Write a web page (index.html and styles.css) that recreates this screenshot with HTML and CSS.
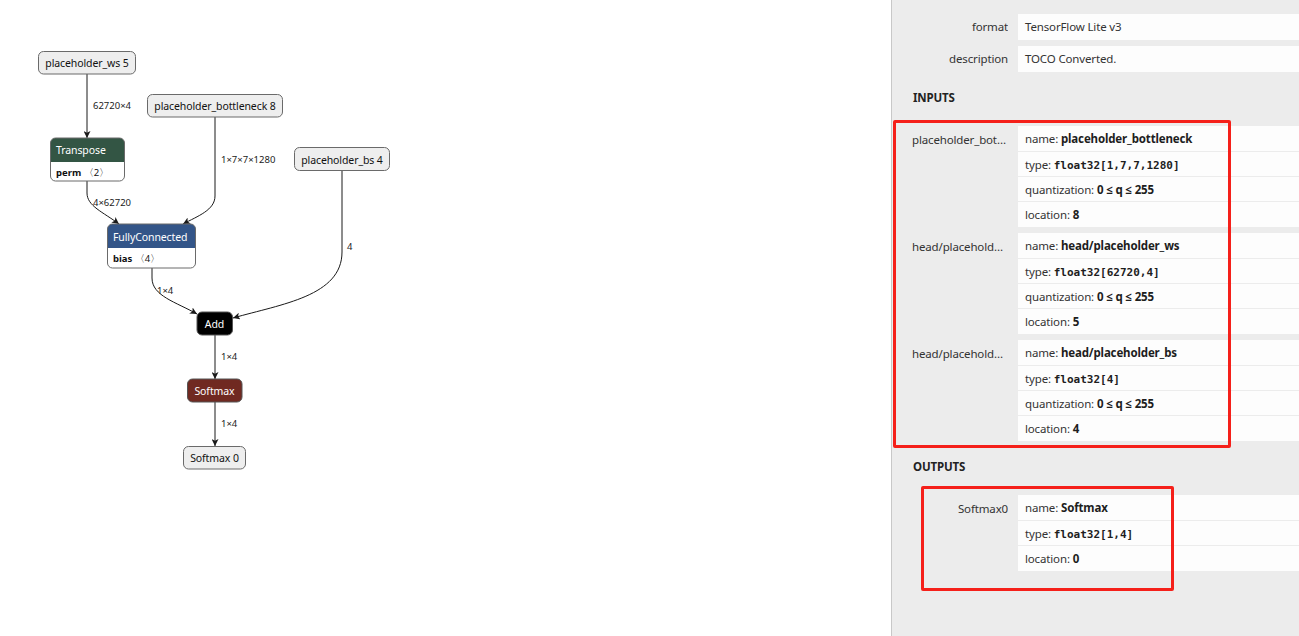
FILE: index.html
```html
<!DOCTYPE html>
<html>
<head>
<meta charset="utf-8">
<link rel="stylesheet" href="styles.css">
</head>
<body>
<div class="app">
  <div class="graph">
    <svg class="canvas" width="891" height="636" viewBox="0 0 891 636">
      <defs>
        <marker id="arrow" viewBox="0 0 10 10" refX="10" refY="5" markerWidth="7" markerHeight="7" markerUnits="userSpaceOnUse" orient="auto">
          <path d="M0 0 L10 5 L0 10 L2.5 5 Z" class="arrowhead"/>
        </marker>
      </defs>
      <g class="edges">
        <path d="M87 74 L87 138" marker-end="url(#arrow)"/>
        <path d="M87 181 L87 193 C87 206 103 212 119 224" marker-end="url(#arrow)"/>
        <path d="M215 117 L215 196 C215 210 198 216 183 224" marker-end="url(#arrow)"/>
        <path d="M342 171 L342 252 C342 296 282 304 233 318" marker-end="url(#arrow)"/>
        <path d="M152 268 L152 278 C152 296 176 302 197 314" marker-end="url(#arrow)"/>
        <path d="M215 335 L215 379" marker-end="url(#arrow)"/>
        <path d="M215 402 L215 446" marker-end="url(#arrow)"/>
      </g>
      <g class="edge-labels">
        <text x="93" y="109">62720×4</text>
        <text x="221" y="163">1×7×7×1280</text>
        <text x="93" y="205.5">4×62720</text>
        <text x="347" y="250">4</text>
        <text x="157" y="293.5">1×4</text>
        <text x="221" y="360">1×4</text>
        <text x="221" y="426.5">1×4</text>
      </g>
      <g class="nodes">
        <rect class="io" x="38.5" y="51.5" width="97" height="22.5" rx="5"/>
        <text class="io-text" x="87" y="66.5">placeholder_ws 5</text>

        <rect class="io" x="147.5" y="94.5" width="135" height="22.5" rx="5"/>
        <text class="io-text" x="215" y="110">placeholder_bottleneck 8</text>

        <rect class="io" x="294.5" y="147.5" width="95" height="23" rx="5"/>
        <text class="io-text" x="342" y="164">placeholder_bs 4</text>

        <path class="hdr transform" d="M50.5 162 V143 A5 5 0 0 1 55.5 138 H119.5 A5 5 0 0 1 124.5 143 V162 Z"/>
        <path class="body" d="M50.5 162 H124.5 V176 A5 5 0 0 1 119.5 181 H55.5 A5 5 0 0 1 50.5 176 Z"/>
        <rect class="frame" x="50.5" y="138" width="74" height="43" rx="5"/>
        <text class="hdr-text" x="56" y="154">Transpose</text>
        <text class="attr" x="56" y="175.5"><tspan class="attr-name">perm</tspan> 〈2〉</text>

        <path class="hdr layer" d="M107.5 248 V229 A5 5 0 0 1 112.5 224 H190.5 A5 5 0 0 1 195.5 229 V248 Z"/>
        <path class="body" d="M107.5 248 H195.5 V263 A5 5 0 0 1 190.5 268 H112.5 A5 5 0 0 1 107.5 263 Z"/>
        <rect class="frame" x="107.5" y="224" width="88" height="44" rx="5"/>
        <text class="hdr-text" x="113" y="241">FullyConnected</text>
        <text class="attr" x="113" y="261.5"><tspan class="attr-name">bias</tspan> 〈4〉</text>

        <rect class="op plain" x="197" y="312" width="35.5" height="23" rx="5"/>
        <text class="hdr-text mid" x="214.5" y="327.5">Add</text>

        <rect class="op activation" x="187.5" y="379" width="54.5" height="23" rx="5"/>
        <text class="hdr-text mid" x="214.5" y="394.5">Softmax</text>

        <rect class="io" x="183.5" y="446.5" width="62" height="22.5" rx="5"/>
        <text class="io-text" x="214.5" y="462">Softmax 0</text>
      </g>
    </svg>
  </div>

  <aside class="sidebar">
    <div class="prop">
      <div class="prop-label tall">format</div>
      <div class="prop-value"><div class="line tall">TensorFlow Lite v3</div></div>
    </div>
    <div class="prop">
      <div class="prop-label tall">description</div>
      <div class="prop-value"><div class="line tall">TOCO Converted.</div></div>
    </div>

    <div class="section-title">INPUTS</div>
    <div class="prop">
      <div class="prop-label">placeholder_bottleneck</div>
      <div class="prop-value">
        <div class="line">name: <b>placeholder_bottleneck</b></div>
        <div class="line">type: <code>float32[1,7,7,1280]</code></div>
        <div class="line">quantization: <b>0 ≤ q ≤ 255</b></div>
        <div class="line">location: <b>8</b></div>
      </div>
    </div>
    <div class="prop">
      <div class="prop-label">head/placeholder_ws</div>
      <div class="prop-value">
        <div class="line">name: <b>head/placeholder_ws</b></div>
        <div class="line">type: <code>float32[62720,4]</code></div>
        <div class="line">quantization: <b>0 ≤ q ≤ 255</b></div>
        <div class="line">location: <b>5</b></div>
      </div>
    </div>
    <div class="prop">
      <div class="prop-label">head/placeholder_bs</div>
      <div class="prop-value">
        <div class="line">name: <b>head/placeholder_bs</b></div>
        <div class="line">type: <code>float32[4]</code></div>
        <div class="line">quantization: <b>0 ≤ q ≤ 255</b></div>
        <div class="line">location: <b>4</b></div>
      </div>
    </div>

    <div class="section-title">OUTPUTS</div>
    <div class="prop">
      <div class="prop-label">Softmax0</div>
      <div class="prop-value">
        <div class="line">name: <b>Softmax</b></div>
        <div class="line">type: <code>float32[1,4]</code></div>
        <div class="line">location: <b>0</b></div>
      </div>
    </div>
  </aside>
</div>
<div class="mark mark-inputs"></div>
<div class="mark mark-outputs"></div>
</body>
</html>
```

FILE: styles.css
```css
html, body {
  margin: 0;
  padding: 0;
  background: #ffffff;
}
body {
  font-family: "Noto Sans", "Open Sans", sans-serif;
  color: #333;
  position: relative;
  width: 1299px;
  height: 636px;
  overflow: hidden;
}
.app {
  display: flex;
  width: 1299px;
  height: 636px;
}
.graph {
  width: 891px;
  flex: none;
  background: #fff;
}
.canvas {
  display: block;
}
.edges path {
  fill: none;
  stroke: #1a1a1a;
  stroke-width: 1;
}
.arrowhead {
  fill: #1a1a1a;
  stroke: none;
}
.edge-labels text {
  font-family: "Noto Sans", sans-serif;
  font-size: 9.5px;
  fill: #222;
}
.io {
  fill: #eeeeee;
  stroke: #6a6a6a;
  stroke-width: 1;
}
.io-text {
  font-family: "Noto Sans", sans-serif;
  font-size: 10.5px;
  letter-spacing: -0.1px;
  fill: #111;
  text-anchor: middle;
}
.hdr {
  stroke: none;
}
.transform { fill: #335544; }
.layer { fill: #335588; }
.plain { fill: #000000; }
.activation { fill: #702921; }
.op {
  stroke: #555;
  stroke-width: 1;
}
.body {
  fill: #ffffff;
  stroke: none;
}
.frame {
  fill: none;
  stroke: #6a6a6a;
  stroke-width: 1;
}
.hdr-text {
  font-family: "Noto Sans", sans-serif;
  font-size: 10.5px;
  letter-spacing: -0.1px;
  fill: #ffffff;
}
.hdr-text.mid {
  text-anchor: middle;
}
.attr {
  font-family: "Noto Sans", sans-serif;
  font-size: 9.5px;
  fill: #111;
}
.attr-name {
  font-weight: bold;
}

.sidebar {
  flex: none;
  border-left: 1px solid #c8c8c8;
  background: #ececec;
  padding: 14px 0 0 20px;
  box-sizing: border-box;
  width: 408px;
  overflow: hidden;
  font-size: 11.5px;
  letter-spacing: -0.15px;
}
.prop {
  display: flex;
  gap: 10px;
  margin-bottom: 6px;
}
.prop-label {
  width: 96px;
  flex: none;
  text-align: right;
  white-space: nowrap;
  overflow: hidden;
  text-overflow: ellipsis;
  padding-top: 1px;
  line-height: 25px;
  color: #333;
}
.prop-label.tall {
  padding-top: 0;
  line-height: 26px;
}
.prop-value {
  flex: 1;
  min-width: 0;
  background: #fdfdfd;
  padding-bottom: 1px;
}
.line {
  height: 25px;
  line-height: 24px;
  padding: 1px 7px 0;
  box-sizing: border-box;
  white-space: nowrap;
  color: #333;
}
.line + .line {
  border-top: 1px solid #ececec;
  line-height: 23px;
}
.line.tall {
  height: 26px;
  line-height: 26px;
  padding-top: 0;
}
.prop-value:has(.tall) {
  padding-bottom: 0;
}
.line b {
  color: #1e1e1e;
  font-weight: bold;
}
.line code {
  font-family: "DejaVu Sans Mono", "Liberation Mono";
  font-size: 11px;
  letter-spacing: 0;
  font-weight: bold;
  color: #1e1e1e;
}
.section-title {
  font-weight: bold;
  color: #222;
  line-height: 16px;
  margin: 18px 0 20px 1px;
}

.mark {
  position: absolute;
  border: 3px solid #f5201a;
  border-radius: 2px;
  box-sizing: border-box;
}
.mark-inputs {
  left: 893px;
  top: 120px;
  width: 338px;
  height: 328px;
}
.mark-outputs {
  left: 921px;
  top: 486px;
  width: 253px;
  height: 105px;
}
```
